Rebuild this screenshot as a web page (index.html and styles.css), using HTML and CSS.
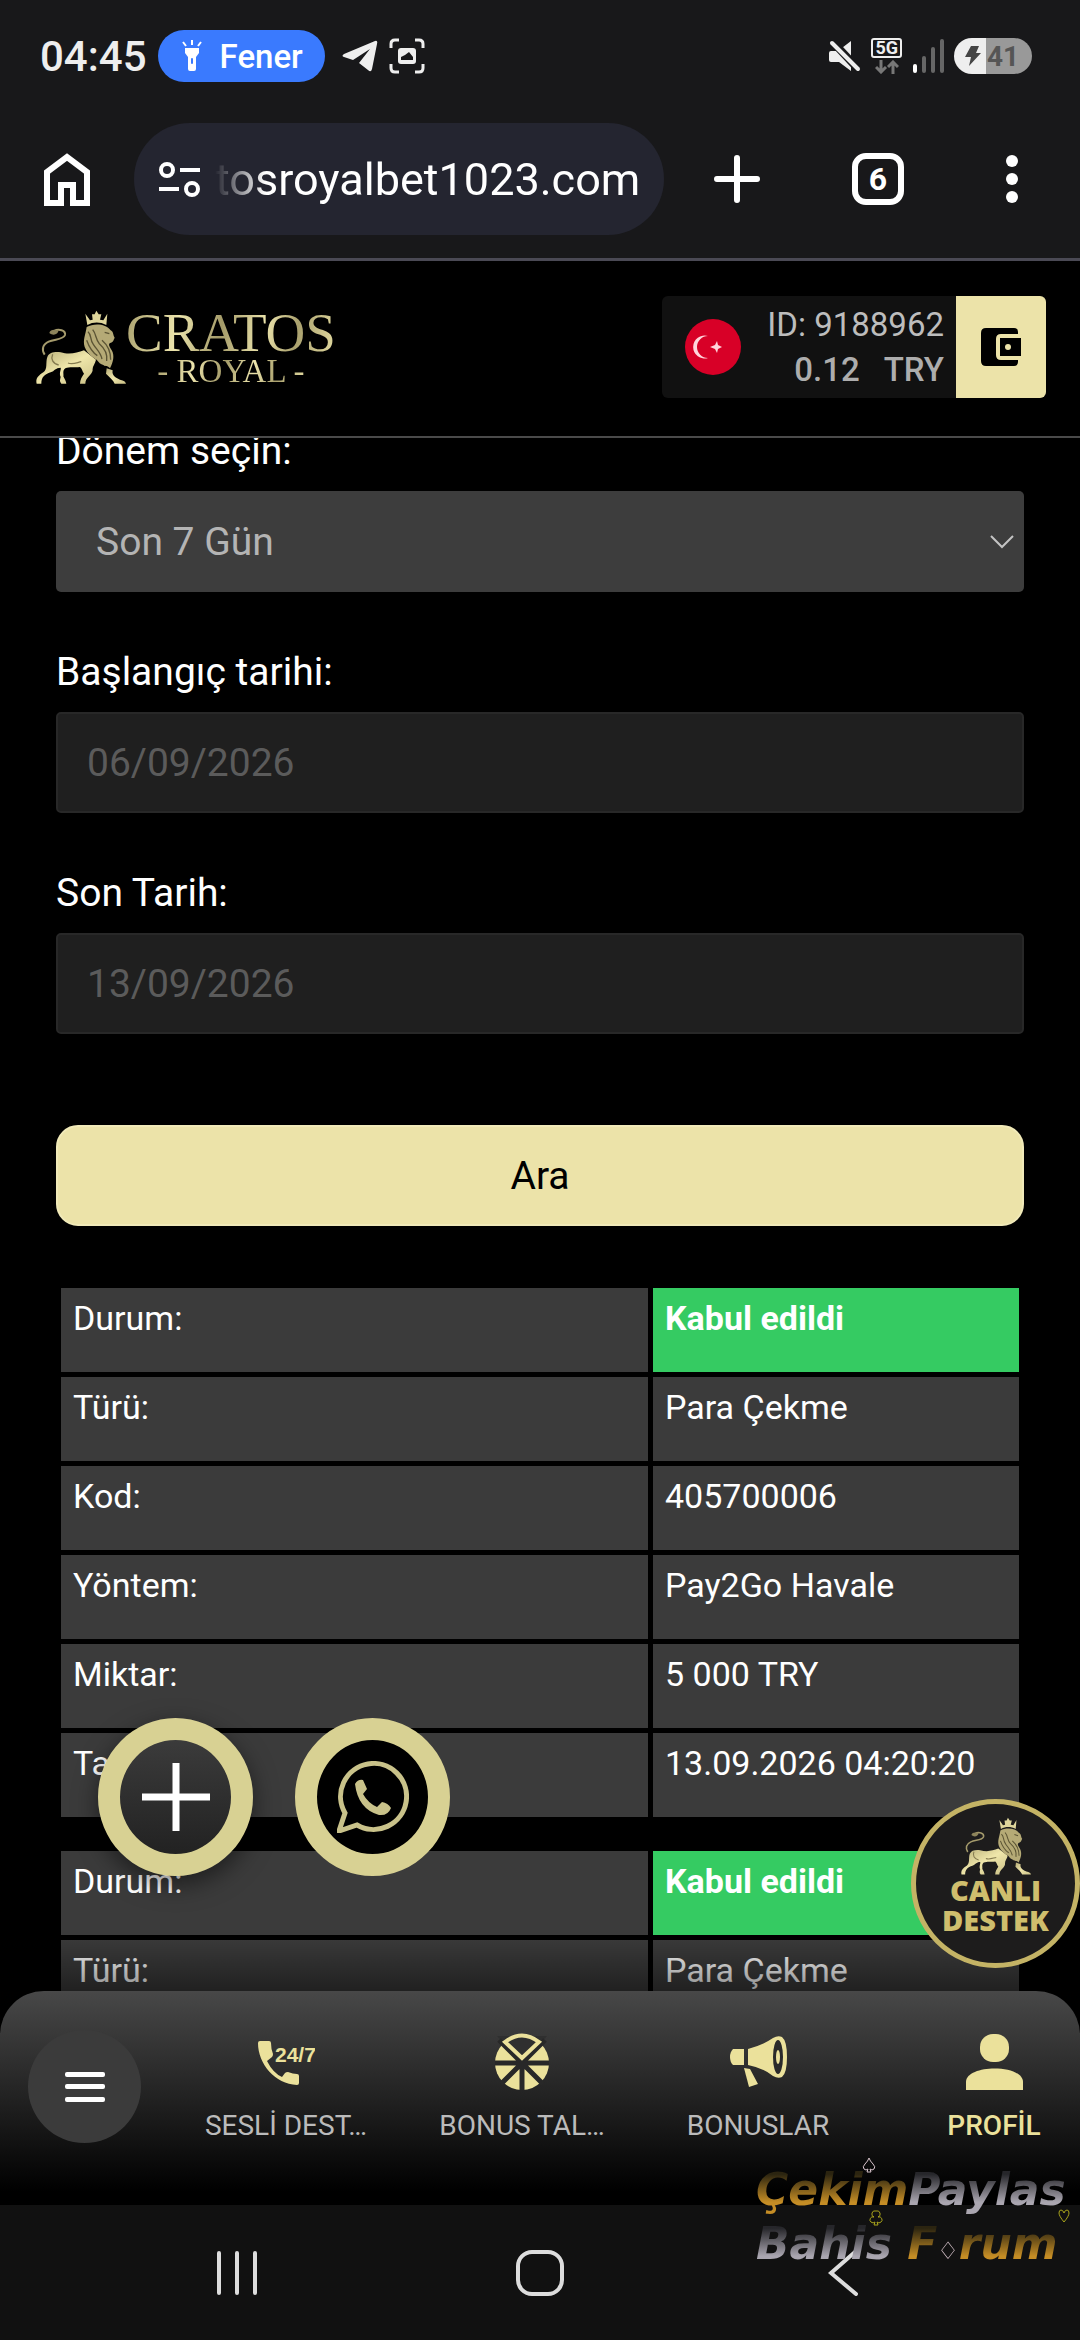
FILE: index.html
```html
<!DOCTYPE html>
<html lang="tr">
<head>
    <meta charset="UTF-8">
    <meta name="viewport" content="width=device-width, initial-scale=1.0">
    <title>Cratos Royal</title>
    <link rel="stylesheet" href="styles.css">
</head>
<body>
    <svg class="defs" aria-hidden="true">
        <defs>
            <linearGradient id="gold" x1="0" y1="0" x2="1" y2="1">
                <stop offset="0" stop-color="#b5ab76"/>
                <stop offset="0.5" stop-color="#efe6aa"/>
                <stop offset="1" stop-color="#c9bf86"/>
            </linearGradient>
            <symbol id="lion" viewBox="16 32 270 220">
                <path d="M42 165C32 150 36 134 54 126C72 118 98 120 103 106C106 92 84 86 70 94" fill="none" stroke="#a59b6c" stroke-width="6"/>
                <path d="M56 100C58 90 70 88 84 92C82 104 68 110 56 100Z" fill="#8d845b"/>
                <path d="M50 172C56 158 72 156 90 158C116 166 138 160 160 152L196 180C194 192 184 200 186 212C184 226 164 234 164 252H148C148 240 154 230 160 222C154 214 154 206 148 202C132 204 116 200 104 206C94 214 100 224 98 230C102 238 106 244 107 252H92C86 246 88 240 90 232C84 222 92 210 90 204C74 204 72 214 60 218C42 224 32 232 32 252H18C14 238 22 228 38 218C52 208 44 188 50 172Z" fill="url(#gold)"/>
                <path d="M228 206L246 212C242 228 258 236 268 240C280 242 285 246 286 252H252C248 242 238 234 226 222Z" fill="url(#gold)"/>
                <path d="M168 82C190 70 226 72 240 92C250 98 246 106 252 114C248 122 248 128 238 130C230 136 242 146 246 158C252 176 244 194 238 206C230 196 224 202 218 196C210 194 204 188 198 180C184 172 170 162 162 142C156 120 164 108 168 82Z" fill="#b5aa76"/>
                <path d="M172 96C184 106 176 118 188 134C198 150 210 158 214 178M186 90C198 104 194 120 206 132C222 146 232 160 228 184M168 122C176 144 184 158 200 168M222 98L236 102M214 122C228 134 240 150 240 180" fill="none" stroke="#5b5434" stroke-width="4"/>
                <path d="M164 42L178 62L186 60L184 44L192 44L197 33L204 44L212 44L208 60L218 62L230 42L227 76C208 66 188 66 170 76Z" fill="#ded59b"/>
                <path d="M66 164C60 178 66 192 84 196M112 190C126 196 140 188 152 186" fill="none" stroke="#857b50" stroke-width="4"/>
            </symbol>
        </defs>
    </svg>

    <header class="browser">
        <div class="status">
            <span class="clock">04:45</span>
            <span class="torch">
                <svg width="20" height="32" viewBox="0 0 20 32" fill="#fff">
                    <path d="M1 2l3 4M10 0v5M19 2l-3 4" stroke="#fff" stroke-width="2"/>
                    <path d="M3 8h14v5l-3 4v12q0 2-2 2H8q-2 0-2-2V17l-3-4z"/>
                    <rect x="9" y="18" width="2" height="6" rx="1" fill="#3a7afe"/>
                </svg>
                Fener
            </span>
            <svg class="telegram" width="36" height="32" viewBox="0 0 36 32"><path d="M2 14L33 1Q36 0 35 4L30 29Q29 33 26 30L17 23L28 9L11 20L2 17Q-1 16 2 14Z" fill="#eee"/></svg>
            <svg width="36" height="36" viewBox="0 0 36 36" fill="none" stroke="#eee" stroke-width="3">
                <path d="M2 10V6q0-4 4-4h4M26 2h4q4 0 4 4v4M34 26v4q0 4-4 4h-4M10 34H6q-4 0-4-4v-4"/>
                <rect x="9" y="10" width="18" height="16" rx="3" fill="#eee" stroke="none"/>
                <path d="M12 22v-3l4-2 4-3 4 5v3z" fill="#18181a" stroke="none"/>
            </svg>
            <div class="status-right">
                <svg width="33" height="33" viewBox="0 0 33 33" fill="#eee">
                    <path d="M3 11h7l13-10v30L11 22H3q-2 0-2-2v-7q0-2 2-2z"/>
                    <path d="M3 0l29 31" stroke="#18181a" stroke-width="8"/>
                    <path d="M4 3l26 26" stroke="#eee" stroke-width="4" stroke-linecap="round"/>
                </svg>
                <span class="network">
                    <b>5G</b>
                    <svg width="24" height="14" viewBox="0 0 24 14" fill="none" stroke="#777" stroke-width="3"><path d="M6 0v12M1 7l5 5 5-5M18 14V2M13 7l5-5 5 5"/></svg>
                </span>
                <svg width="32" height="34" viewBox="0 0 32 34" stroke-width="4" stroke-linecap="round"><path d="M3 27v5" stroke="#fff"/><path d="M12 19v13M21 10v22M30 2v30" stroke="#666"/></svg>
                <span class="battery">
                    <svg width="16" height="20" viewBox="0 0 16 20"><path d="M6 0h8l-3 7h5L4 20l2-9H0z" fill="#444"/></svg>
                    41
                </span>
            </div>
        </div>
        <div class="toolbar">
            <button aria-label="Ana sayfa">
                <svg width="46" height="53" viewBox="0 0 46 53" fill="none" stroke="#fff" stroke-width="6"><path d="M3 50V19L23 4l20 15v31H29V32H17v18z"/></svg>
            </button>
            <div class="address">
                <svg width="43" height="37" viewBox="0 0 43 37" fill="none" stroke="#fff" stroke-width="4"><circle cx="9" cy="9" r="6"/><circle cx="34" cy="28" r="6"/><path d="M22 9h20M1 28h20"/></svg>
                <input type="text" class="url" aria-label="Adres" value="tosroyalbet1023.com">
            </div>
            <div class="tools">
                <button aria-label="Yeni sekme">
                    <svg width="46" height="48" viewBox="0 0 46 48" stroke="#fff" stroke-width="6" stroke-linecap="round"><path d="M23 3v42M3 24h40"/></svg>
                </button>
                <button class="tabs" aria-label="Sekmeler">6</button>
                <button aria-label="Menü">
                    <svg width="32" height="48" viewBox="0 0 32 48" fill="#fff"><circle cx="16" cy="6" r="6"/><circle cx="16" cy="24" r="6"/><circle cx="16" cy="42" r="6"/></svg>
                </button>
            </div>
        </div>
    </header>

    <div class="site-header">
        <a href="#" class="logo">
            <svg width="90" height="74"><use href="#lion"/></svg>
            <span class="logo-text">
                <span class="logo-name">CRATOS</span>
                <span class="logo-sub">- ROYAL -</span>
            </span>
        </a>
        <div class="account">
            <svg class="flag" width="56" height="56" viewBox="0 0 56 56">
                <circle cx="28" cy="28" r="28" fill="#d80027"/>
                <path d="M23 17a11.500 11.500 0 1 0 0 22a9 9 0 1 1 0-22z" fill="#ffd5dc"/>
                <path d="M32 22l-2 4-5 2 5 2 2 4 1-4 4-2-4-2z" fill="#ffd5dc"/>
            </svg>
            <div class="balance">
                <span>ID: 9188962</span>
                <span class="amount"><span>0.12</span><span>TRY</span></span>
            </div>
            <button class="wallet" aria-label="Cüzdan">
                <svg width="40" height="38" viewBox="0 0 40 38"><path d="M5 0h28q4 0 4 4v2H20q-5 0-5 5v16q0 5 5 5h17v2q0 4-4 4H5q-5 0-5-5V5q0-5 5-5z"/><path d="M19 10h21v18H19z"/><circle cx="27" cy="19" r="3" fill="#ece3a9"/></svg>
            </button>
        </div>
    </div>

    <main class="content">
        <form class="filter">
            <label for="donem">Dönem seçin:</label>
            <div class="select-box">
                <select id="donem">
                    <option>Son 7 Gün</option>
                </select>
                <svg class="chevron" width="24" height="14" viewBox="0 0 24 14" fill="none" stroke="#c4c4c4" stroke-width="2"><path d="M1 1l11 11L23 1"/></svg>
            </div>

            <label for="baslangic">Başlangıç tarihi:</label>
            <input type="text" id="baslangic" value="06/09/2026" readonly>

            <label for="son">Son Tarih:</label>
            <input type="text" id="son" value="13/09/2026" readonly>

            <button type="submit" class="search">Ara</button>
        </form>

        <table class="record">
            <tr><th>Durum:</th><td class="accepted">Kabul edildi</td></tr>
            <tr><th>Türü:</th><td>Para Çekme</td></tr>
            <tr><th>Kod:</th><td>405700006</td></tr>
            <tr><th>Yöntem:</th><td>Pay2Go Havale</td></tr>
            <tr><th>Miktar:</th><td>5 000 TRY</td></tr>
            <tr><th>Tarih:</th><td>13.09.2026 04:20:20</td></tr>
        </table>
        <table class="record">
            <tr><th>Durum:</th><td class="accepted">Kabul edildi</td></tr>
            <tr><th>Türü:</th><td>Para Çekme</td></tr>
        </table>
    </main>

    <nav class="bottom-nav">
        <button class="menu" aria-label="Menü">
            <svg width="40" height="30" viewBox="0 0 40 30" fill="#fff"><rect width="40" height="5" rx="2"/><rect y="12" width="40" height="5" rx="2"/><rect y="25" width="40" height="5" rx="2"/></svg>
        </button>
        <div class="nav-list">
            <a href="#" class="nav-item">
                <svg width="57" height="57" viewBox="0 0 57 57" fill="#ebe19b">
                    <path d="M2 8h9q2 0 2 2 0 6 2 11 0 2-1 3l-5 4q6 12 15 16l3-4q1-1 3-1 5 2 9 2 2 0 2 2v7q0 2-2 2C17 51 0 31 0 10q0-2 2-2z"/>
                    <text x="17" y="29" class="support-text">24/7</text>
                </svg>
                <span>SESLİ DEST…</span>
            </a>
            <a href="#" class="nav-item">
                <svg width="54" height="57" viewBox="0 0 54 57">
                    <circle cx="27" cy="30" r="27" fill="#ebe19b"/>
                    <path d="M27 30L2 3h50z" fill="#2f2f2f"/>
                    <path d="M0 30h54M27 30v27M27 30L6 51M27 30l21 21M27 30L4 7M27 30L50 7" stroke="#282828" stroke-width="5"/>
                    <path d="M10 9q17-13 34 0L27 25z" fill="#2f2f2f" stroke="#ebe19b" stroke-width="4"/>
                </svg>
                <span>BONUS TAL…</span>
            </a>
            <a href="#" class="nav-item">
                <svg width="57" height="57" viewBox="0 0 57 57" fill="#ebe19b">
                    <path d="M3 16h11v16H3q-3-3-3-8t3-8z"/>
                    <path d="M18 16Q33 12 43 5q5-3 9-1 5 4 5 20t-5 20q-4 2-9-1Q33 35 18 32z"/>
                    <ellipse cx="48" cy="24" rx="5" ry="17" fill="#2a2a2a"/>
                    <ellipse cx="48" cy="24" rx="2" ry="7"/>
                    <path d="M14 35l6 1 8 15-9 3z"/>
                </svg>
                <span>BONUSLAR</span>
            </a>
            <a href="#" class="nav-item active">
                <svg width="57" height="57" viewBox="0 0 57 57" fill="#ebe19b"><rect x="14" y="1" width="29" height="28" rx="13"/><path d="M0 57v-8C0 31 57 31 57 49v8z"/></svg>
                <span>PROFİL</span>
            </a>
        </div>
    </nav>

    <footer class="system-nav">
        <button aria-label="Son uygulamalar"><svg width="40" height="44" viewBox="0 0 40 44" stroke="#ddd" stroke-width="4" stroke-linecap="round"><path d="M2 2v40M20 2v40M38 2v40"/></svg></button>
        <button aria-label="Ana ekran"><svg width="48" height="46" viewBox="0 0 48 46"><rect x="2" y="2" width="44" height="42" rx="14" fill="none" stroke="#ddd" stroke-width="4"/></svg></button>
        <button aria-label="Geri"><svg width="30" height="46" viewBox="0 0 30 46" fill="none" stroke="#ddd" stroke-width="4" stroke-linecap="round"><path d="M27 2L3 23l25 21"/></svg></button>
    </footer>

    <!-- Yüzen butonlar -->
    <div class="floating">
        <button class="round plus" aria-label="Ekle">
            <svg width="68" height="68" viewBox="0 0 68 68" stroke="#fff" stroke-width="7"><path d="M34 0v68M0 34h68"/></svg>
        </button>
        <a href="#" class="round whatsapp" aria-label="WhatsApp">
            <svg width="72" height="72" viewBox="0 0 72 72">
                <path d="M2 70l6-18A33 33 0 1 1 20 64z" fill="none" stroke="#c9c28a" stroke-width="5"/>
                <path d="M18 23q3-5 8-4l4 9-4 5q5 9 14 13l5-5q6 1 9 6-3 8-12 7Q21 48 18 23z" fill="#c9c28a"/>
            </svg>
        </a>
    </div>
    <a href="#" class="live-support">
        <svg width="70" height="58"><use href="#lion"/></svg>
        <span>CANLI</span>
        <span>DESTEK</span>
    </a>
    <div class="watermark">
        <div><span class="orange">Çekim</span><span class="silver">Paylas</span></div>
        <div><span class="silver">Bahis</span> <span class="orange">F</span><small>♢</small><span class="orange">rum</span></div>
        <svg class="suit spade" width="14" height="16" viewBox="0 0 14 16"><path d="M7 1Q8 4 11 7 14 10 12 12 10 14 8 12L9 15H5L6 12Q4 14 2 12 0 10 3 7 6 4 7 1Z"/></svg>
        <svg class="suit heart" width="12" height="14" viewBox="0 0 12 14"><path d="M6 13Q1 7 1 4 1 1 3 1 5 1 6 4 7 1 9 1 11 1 11 4 11 7 6 13Z"/></svg>
        <svg class="suit club" width="16" height="16" viewBox="0 0 16 16"><path d="M8 1a3 3 0 0 1 2 6a3 3 0 1 1-1 5l1 3H6l1-3a3 3 0 1 1-1-5a3 3 0 0 1 2-6z"/></svg>
    </div>
</body>
</html>
```
FILE: styles.css
```css
* {
    box-sizing: border-box;
}

body {
    display: flex;
    flex-direction: column;
    height: 100vh;
    margin: 0;
    overflow: hidden;
    background-color: #000;
    color: #fff;
    font-family: Roboto, sans-serif;
}

button,
input,
select {
    font-family: inherit;
    margin: 0;
}

button {
    border: none;
    padding: 0;
    background: none;
    color: inherit;
    cursor: pointer;
}

a {
    color: inherit;
    text-decoration: none;
}

svg {
    display: block;
    flex-shrink: 0;
}

.defs {
    position: absolute;
    width: 0;
    height: 0;
}

/* Tarayıcı */
.browser {
    background-color: #18181a;
    border-bottom: 3px solid #4a4954;
    padding: 30px 48px 23px 40px;
}

.status {
    display: flex;
    align-items: center;
    gap: 11px;
    height: 52px;
}

.clock {
    font-size: 42px;
    font-weight: 500;
    color: #eee;
}

.torch {
    display: flex;
    align-items: center;
    gap: 18px;
    height: 52px;
    margin-right: 6px;
    padding: 0 22px 0 24px;
    border-radius: 26px;
    background-color: #3a7afe;
    font-size: 33px;
    font-weight: 500;
}

.status-right {
    display: flex;
    align-items: center;
    gap: 10px;
    margin-left: auto;
}

.network {
    display: flex;
    flex-direction: column;
    align-items: center;
    gap: 2px;
}

.network b {
    border: 2px solid #eee;
    border-radius: 3px;
    padding: 0 2px;
    font-size: 18px;
    line-height: 16px;
    color: #eee;
}

.battery {
    display: flex;
    align-items: center;
    gap: 6px;
    width: 78px;
    height: 36px;
    padding-left: 11px;
    border-radius: 18px;
    background: linear-gradient(to right, #eee 41%, #999 41%);
    color: #555;
    font-size: 28px;
    font-weight: 700;
}

.toolbar {
    display: flex;
    align-items: center;
    margin-top: 41px;
    padding: 0 4px;
}

.address {
    display: flex;
    flex: 1;
    align-items: center;
    gap: 14px;
    min-width: 0;
    height: 112px;
    margin: 0 50px 0 44px;
    padding: 0 24px;
    border-radius: 56px;
    background-color: #242530;
}

.url {
    flex: 1;
    min-width: 0;
    border: none;
    outline: none;
    padding: 0;
    background: none;
    color: #fff;
    font-size: 45px;
    text-align: right;
    -webkit-mask-image: linear-gradient(to right, transparent, #000 50px);
    mask-image: linear-gradient(to right, transparent, #000 50px);
}

.tools {
    display: flex;
    align-items: center;
    gap: 92px;
}

.tabs {
    width: 52px;
    height: 52px;
    border: 6px solid #fff;
    border-radius: 14px;
    font-size: 32px;
    font-weight: 700;
    line-height: 40px;
}

/* Site başlığı */
.site-header {
    display: flex;
    align-items: center;
    justify-content: space-between;
    padding: 35px 34px 38px 36px;
    border-bottom: 2px solid #4a4a4a;
}

.logo {
    display: flex;
    align-items: center;
}

.logo-text {
    display: flex;
    flex-direction: column;
    align-items: center;
    font-family: "Liberation Serif", serif;
}

.logo-name,
.logo-sub {
    background: linear-gradient(100deg, #a9a06d, #ece4ac 25%, #a39a68 45%, #ece4ac 65%, #a9a06d 80%, #e4dca2);
    -webkit-background-clip: text;
    background-clip: text;
    color: transparent;
}

.logo-name {
    font-size: 55px;
    line-height: 48px;
}

.logo-sub {
    font-size: 33px;
    line-height: 28px;
}

.account {
    display: flex;
    align-items: center;
    height: 102px;
    border-radius: 6px;
    overflow: hidden;
    background-color: #111;
}

.flag {
    margin: 0 26px 0 23px;
}

.balance {
    display: flex;
    flex-direction: column;
    align-items: flex-end;
    padding-right: 12px;
    color: #bdbdbd;
    font-size: 33px;
    line-height: 45px;
}

.amount {
    display: flex;
    gap: 24px;
    color: #adadad;
    font-weight: 500;
}

.wallet {
    display: flex;
    align-items: center;
    justify-content: center;
    width: 90px;
    height: 102px;
    background-color: #ece3a9;
}

/* Filtre formu */
.content {
    position: relative;
    flex: 1;
    min-height: 0;
    overflow: hidden;
    padding: 0 56px;
}

.content::after {
    content: "";
    position: absolute;
    left: 0;
    right: 0;
    bottom: 0;
    height: 56px;
    background: linear-gradient(transparent, rgba(0, 0, 0, 0.45));
}

.filter {
    display: flex;
    flex-direction: column;
    margin-top: -9px;
}

.filter label {
    font-size: 39px;
    line-height: 44px;
    margin-bottom: 18px;
}

.select-box {
    position: relative;
    margin-bottom: 58px;
}

.select-box select {
    display: block;
    width: 100%;
    height: 101px;
    padding: 0 40px;
    border: none;
    border-radius: 5px;
    background-color: #3d3d3d;
    color: #b4b4b4;
    font-size: 39px;
    appearance: none;
}

.chevron {
    position: absolute;
    right: 10px;
    top: 44px;
}

.filter input {
    height: 101px;
    margin-bottom: 58px;
    padding: 0 29px;
    border: 2px solid #282828;
    border-radius: 5px;
    background-color: #1f1f1f;
    color: #5b5b5b;
    font-size: 39px;
}

.search {
    height: 101px;
    margin: 33px 0 57px;
    border: 2px solid #f1eab9;
    border-radius: 22px;
    background-color: #ece3a9;
    color: #000;
    font-size: 39px;
}

/* İşlem kayıtları */
.record {
    width: 100%;
    border-spacing: 5px;
    margin-bottom: 24px;
    table-layout: fixed;
    font-size: 34px;
    line-height: 40px;
}

.record th,
.record td {
    height: 84px;
    padding: 10px 12px 0;
    background-color: #3b3b3b;
    font-weight: 400;
    text-align: left;
    vertical-align: top;
}

.record td {
    width: 366px;
}

.record .accepted {
    background-color: #35cb62;
    font-weight: 700;
}

/* Alt menü */
.bottom-nav {
    display: flex;
    height: 214px;
    padding: 39px 0 0 28px;
    border-radius: 44px 44px 0 0;
    background: linear-gradient(#484848, #000 94%);
}

.menu {
    display: flex;
    align-items: center;
    justify-content: center;
    flex-shrink: 0;
    width: 113px;
    height: 113px;
    border-radius: 50%;
    background-color: #3b3b3b;
}

.nav-list {
    display: flex;
    flex: 1;
    min-width: 0;
    margin-left: 27px;
    overflow: hidden;
}

.nav-item {
    display: flex;
    flex: 0 0 236px;
    flex-direction: column;
    align-items: center;
    gap: 20px;
    padding-top: 3px;
    color: #bbb;
    font-size: 28px;
    line-height: 32px;
}

.nav-item.active {
    color: #ebe19b;
    font-weight: 500;
}

.support-text {
    font-family: "Liberation Sans Narrow", "Liberation Sans", sans-serif;
    font-size: 21px;
    font-weight: 700;
}

.system-nav {
    display: flex;
    align-items: center;
    height: 135px;
    padding: 0 85px;
    background-color: #111;
}

.system-nav button {
    display: flex;
    flex: 1;
    justify-content: center;
}

/* Yüzen butonlar */
.floating {
    position: fixed;
    left: 98px;
    bottom: 464px;
    display: flex;
    gap: 42px;
}

.round {
    display: flex;
    align-items: center;
    justify-content: center;
    width: 155px;
    height: 158px;
    border: 22px solid #d8d193;
    border-radius: 50%;
}

.plus {
    background: linear-gradient(#3b3b3b, #222);
    box-shadow: 0 8px 24px rgba(0, 0, 0, 0.5);
}

.whatsapp {
    background-color: #000;
}

.live-support {
    position: fixed;
    right: 0;
    bottom: 372px;
    display: flex;
    flex-direction: column;
    align-items: center;
    width: 169px;
    height: 169px;
    padding-top: 13px;
    border: 5px solid #c4b365;
    border-radius: 50%;
    background-color: #1d1c1c;
    color: #cfbe6d;
    font-family: "Open Sans", sans-serif;
    font-size: 29px;
    font-weight: 800;
    line-height: 30px;
}

.watermark {
    position: fixed;
    right: 0;
    bottom: 62px;
    width: 324px;
    font-family: "DejaVu Sans", sans-serif;
    font-size: 44px;
    font-style: italic;
    font-weight: 700;
    line-height: 54px;
    white-space: nowrap;
    pointer-events: none;
}

.orange,
.silver {
    background: linear-gradient(#2b2410 20%, #c58d25 75%);
    -webkit-background-clip: text;
    background-clip: text;
    color: transparent;
}

.silver {
    background-image: linear-gradient(#26262a 20%, #aaa6b0 75%);
}

.watermark small {
    font-size: 24px;
    font-weight: 400;
    color: #d8c4cc;
}

.suit {
    position: absolute;
    fill: none;
    stroke: #a9a41c;
}

.spade {
    left: 106px;
    top: -6px;
    stroke: #d8c4cc;
}

.heart {
    right: 10px;
    top: 46px;
}

.club {
    left: 112px;
    top: 47px;
}
```
